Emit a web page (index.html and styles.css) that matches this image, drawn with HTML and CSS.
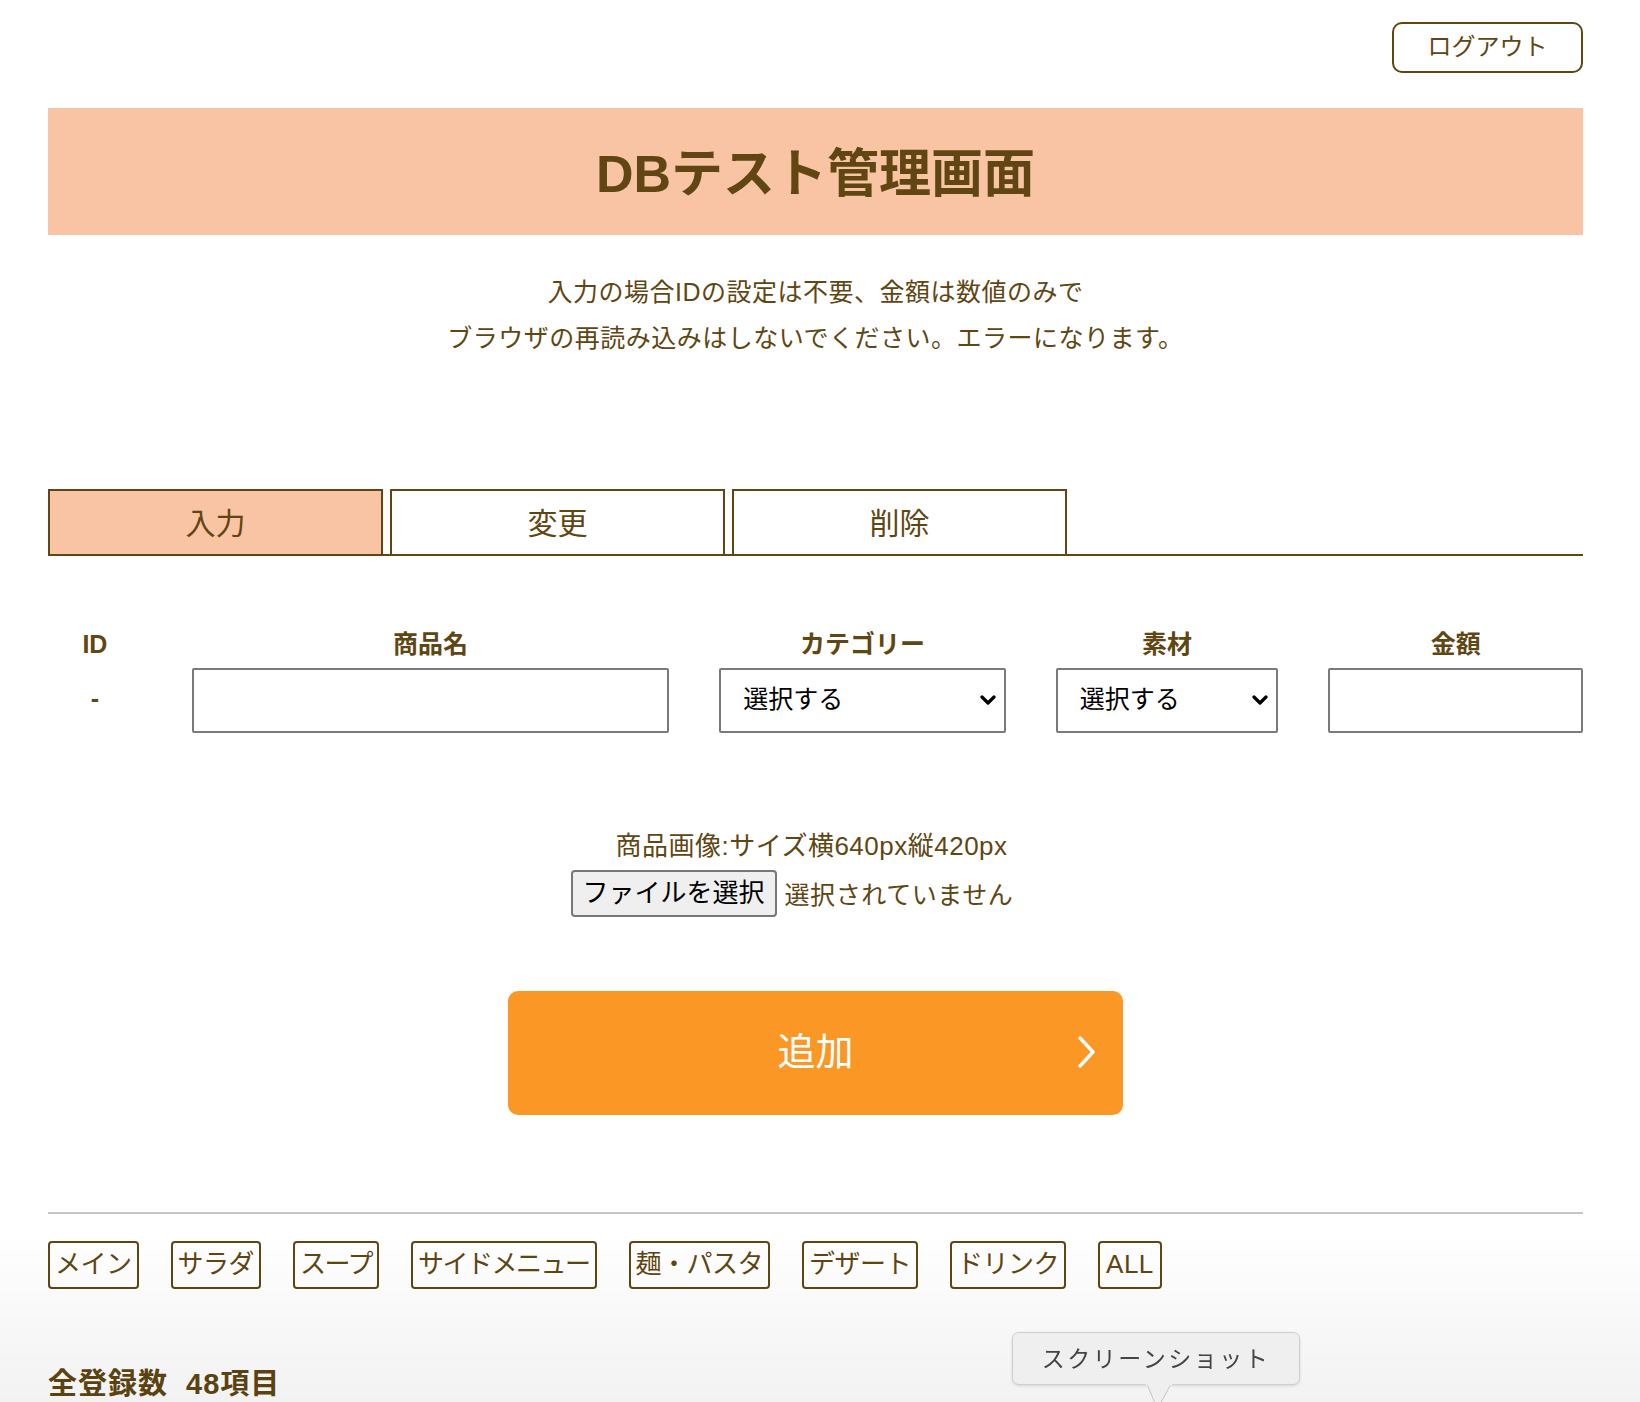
FILE: index.html
```html
<!DOCTYPE html>
<html lang="ja">
<head>
<meta charset="utf-8">
<title>DBテスト管理画面</title>
<link rel="stylesheet" href="styles.css">
</head>
<body>
<div class="page">
  <div class="topbar">
    <button class="logout" type="button">ログアウト</button>
  </div>

  <h1 class="banner">DBテスト管理画面</h1>

  <div class="notes">
    <p>入力の場合IDの設定は不要、金額は数値のみで</p>
    <p>ブラウザの再読み込みはしないでください。エラーになります。</p>
  </div>

  <nav class="tabs">
    <div class="tab active">入力</div>
    <div class="tab">変更</div>
    <div class="tab">削除</div>
  </nav>

  <div class="form-row">
    <div class="field f-id">
      <div class="label">ID</div>
      <div class="id-val">-</div>
    </div>
    <div class="field f-name">
      <div class="label">商品名</div>
      <input class="text-input" type="text">
    </div>
    <div class="field f-cat">
      <div class="label">カテゴリー</div>
      <div class="select-wrap">
        <select class="select"><option>選択する</option></select>
        <svg class="chev" width="16" height="11" viewBox="0 0 16 11"><path d="M2 2 L8 8 L14 2" fill="none" stroke="#000" stroke-width="3.2" stroke-linecap="round" stroke-linejoin="round"/></svg>
      </div>
    </div>
    <div class="field f-mat">
      <div class="label">素材</div>
      <div class="select-wrap">
        <select class="select"><option>選択する</option></select>
        <svg class="chev" width="16" height="11" viewBox="0 0 16 11"><path d="M2 2 L8 8 L14 2" fill="none" stroke="#000" stroke-width="3.2" stroke-linecap="round" stroke-linejoin="round"/></svg>
      </div>
    </div>
    <div class="field f-price">
      <div class="label">金額</div>
      <input class="text-input" type="text">
    </div>
  </div>

  <div class="upload">
    <div class="upload-label">商品画像:サイズ横640px縦420px</div>
    <div class="file-row">
      <span class="file-btn">ファイルを選択</span>
      <span class="file-status">選択されていません</span>
    </div>
  </div>

  <div class="submit-wrap">
    <button class="submit" type="button">追加
      <svg class="submit-chev" width="20" height="34" viewBox="0 0 20 34"><path d="M3 3 L16 17 L3 31" fill="none" stroke="#fff" stroke-width="3.4" stroke-linecap="round" stroke-linejoin="round"/></svg>
    </button>
  </div>

  <hr class="sep">

  <div class="cats">
    <span class="cat">メイン</span>
    <span class="cat">サラダ</span>
    <span class="cat cat-tight">スープ</span>
    <span class="cat cat-tight">サイドメニュー</span>
    <span class="cat">麺・パスタ</span>
    <span class="cat">デザート</span>
    <span class="cat">ドリンク</span>
    <span class="cat cat-latin">ALL</span>
  </div>

  <div class="total">全登録数&nbsp;&nbsp;48項目</div>
</div>

<div class="shade"></div>
<div class="tooltip">スクリーンショット<svg class="tail" width="26" height="24" viewBox="0 0 26 24"><path d="M1 0 L10 22 L13 22 L25 0" fill="#efefef" stroke="#c4c4c4" stroke-width="1"/><rect x="0" y="0" width="26" height="1.5" fill="#efefef"/></svg></div>
</body>
</html>
```

FILE: styles.css
```css
html, body {
  margin: 0;
  padding: 0;
  overflow: hidden;
  background: #ffffff;
}

body {
  font-family: "Liberation Sans", "Noto Sans CJK JP", sans-serif;
  color: #604612;
}

.page {
  padding: 22px 57px 0 48px;
}

.topbar {
  display: flex;
  justify-content: flex-end;
}

.logout {
  box-sizing: border-box;
  width: 191px;
  height: 51px;
  border: 2px solid #604612;
  border-radius: 10px;
  background: #fff;
  color: #604612;
  font-family: inherit;
  font-size: 24px;
  line-height: 1;
  padding: 0 0 1px;
}

.banner {
  margin: 35px 0 0;
  height: 127px;
  box-sizing: border-box;
  padding-top: 6px;
  line-height: 121px;
  background: #f9c4a3;
  text-align: center;
  font-size: 52px;
  font-weight: 700;
  letter-spacing: 0;
}

.notes {
  margin-top: 34px;
  text-align: center;
  font-size: 25px;
  line-height: 46px;
  letter-spacing: 0.5px;
}
.notes p {
  margin: 0;
}

.tabs {
  margin-top: 128px;
  display: flex;
  gap: 7px;
  border-bottom: 2px solid #604612;
}

.tab {
  width: 335px;
  box-sizing: border-box;
  height: 65px;
  padding-top: 3px;
  line-height: 60px;
  border: 2px solid #604612;
  border-bottom: none;
  text-align: center;
  font-size: 30px;
  background: #fff;
}
.tab.active {
  background: #f9c4a3;
}

.form-row {
  margin-top: 70px;
  display: flex;
  gap: 50px;
}

.field {
  display: flex;
  flex-direction: column;
}
.f-id { width: 94px; }
.f-name { width: 478px; }
.f-cat { width: 287px; }
.f-mat { width: 223px; }
.f-price { width: 255px; }

.label {
  text-align: center;
  font-size: 25px;
  font-weight: 700;
  line-height: 36px;
  padding-bottom: 6px;
}

.id-val {
  text-align: center;
  font-size: 25px;
  font-weight: 700;
  line-height: 60px;
}

.text-input,
.select {
  box-sizing: border-box;
  width: 100%;
  height: 65px;
  border: 2px solid #7a7a7a;
  border-radius: 2px;
  background: #fff;
  font-family: inherit;
  font-size: 25px;
  color: #000;
  margin: 0;
}

.select {
  appearance: none;
  -webkit-appearance: none;
  padding: 0 40px 3px 22px;
}

.select-wrap {
  position: relative;
}
.chev {
  position: absolute;
  right: 10px;
  top: 27px;
  pointer-events: none;
}

.upload {
  width: 482px;
  margin: 95px auto 0;
  position: relative;
  left: -4px;
}
.upload-label {
  text-align: center;
  font-size: 26px;
  line-height: 36px;
  letter-spacing: 0.5px;
}
.file-row {
  margin-top: 6px;
  display: flex;
  align-items: center;
  gap: 8px;
}
.file-btn {
  box-sizing: border-box;
  height: 47px;
  line-height: 42px;
  padding: 0 10px 1px;
  background: #efefef;
  border: 2px solid #777;
  border-radius: 4px;
  color: #000;
  font-size: 26px;
}
.file-status {
  font-size: 25px;
  letter-spacing: 0.6px;
  padding-bottom: 2px;
}

.submit-wrap {
  margin-top: 74px;
  display: flex;
  justify-content: center;
}
.submit {
  position: relative;
  width: 615px;
  height: 124px;
  border: none;
  border-radius: 10px;
  background: #fa9725;
  color: #fff;
  font-family: inherit;
  font-size: 38px;
  padding: 0 0 9px;
}
.submit-chev {
  position: absolute;
  right: 26px;
  top: 44px;
}

.sep {
  margin: 97px 0 0;
  border: none;
  height: 2px;
  background: #c6c6c6;
}

.cats {
  margin-top: 27px;
  display: flex;
  gap: 32px;
}
.cat {
  box-sizing: border-box;
  height: 48px;
  line-height: 42px;
  padding: 0 5px 2px;
  border: 2px solid #604612;
  border-radius: 4px;
  font-size: 26px;
  letter-spacing: -0.5px;
}
.cat.cat-tight {
  letter-spacing: -1.5px;
}
.cat.cat-latin {
  letter-spacing: 0.5px;
  padding: 0 6px 2px;
}

.total {
  margin-top: 75px;
  font-size: 29px;
  font-weight: 700;
  line-height: 40px;
  letter-spacing: 1px;
}

.shade {
  position: fixed;
  left: 0;
  right: 0;
  bottom: 0;
  height: 170px;
  background: linear-gradient(to bottom, rgba(0,0,0,0), rgba(0,0,0,0.05));
  pointer-events: none;
}

.tooltip {
  position: fixed;
  left: 1012px;
  top: 1332px;
  width: 288px;
  height: 53px;
  box-sizing: border-box;
  background: #efefef;
  border: 1px solid #cfcfcf;
  border-radius: 7px;
  box-shadow: 0 1px 3px rgba(0,0,0,0.12);
  color: #444;
  font-family: "Noto Sans CJK JP", sans-serif;
  font-size: 23px;
  letter-spacing: 2.5px;
  line-height: 49px;
  text-align: center;
}
.tooltip .tail {
  position: absolute;
  left: 133px;
  top: 51px;
}
```
